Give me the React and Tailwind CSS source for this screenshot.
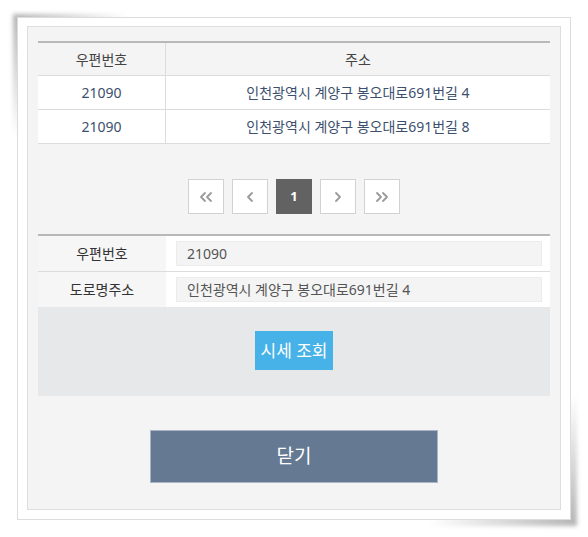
const font = "font-['Noto_Sans','Noto_Sans_CJK_KR',sans-serif]"

function Chevron({ double, right }) {
  return (
    <svg width={double ? 14 : 8} height="12" viewBox={double ? '0 0 14 12' : '0 0 8 12'} fill="none"
      stroke="#9a9a9a" strokeWidth="1.8" strokeLinecap="round" strokeLinejoin="round"
      style={{ transform: right ? 'scaleX(-1)' : undefined }}>
      {double ? (
        <>
          <path d="M6 2 2 6l4 4" />
          <path d="M12 2 8 6l4 4" />
        </>
      ) : (
        <path d="M6 2 2 6l4 4" />
      )}
    </svg>
  )
}

const rows = [
  { zip: '21090', addr: '인천광역시 계양구 봉오대로691번길 4' },
  { zip: '21090', addr: '인천광역시 계양구 봉오대로691번길 8' },
]

export default function App() {
  return (
    <div className={`min-h-[537px] bg-white pt-[17px] pl-[17px] ${font}`}>
      {/* framed popup */}
      <div className="relative isolate w-[554px] h-[503px]">
        <div className="absolute -left-[4px] -top-[3px] w-[130px] h-[140px] -z-10 bg-gradient-to-br from-black/30 to-transparent to-45% blur-[2px]" />
        <div className="absolute -right-[6px] -bottom-[6px] w-[170px] h-[150px] -z-10 bg-gradient-to-tl from-black/30 to-transparent to-45% blur-[2px]" />

        <div className="h-full bg-white border border-[#dcdcdc] pt-[8px] px-[9px] pb-[9px]">
          <div className="h-full bg-[#f4f4f4] border border-[#dedede] pt-[14px] px-[10px]">

            {/* result table */}
            <div className="border-t-2 border-[#b8b8b8] text-[14px]">
              <div className="flex h-[33px] bg-[#f4f4f4] border-b border-[#dcdcdc] text-[#444]">
                <div className="w-[128px] border-r border-[#dcdcdc] flex items-center justify-center">우편번호</div>
                <div className="flex-1 flex items-center justify-center">주소</div>
              </div>
              {rows.map((r, i) => (
                <div key={i} className="flex h-[34px] bg-white border-b border-[#dcdcdc] text-[#3c4f6d]">
                  <div className="w-[128px] border-r border-[#dcdcdc] flex items-center justify-center">{r.zip}</div>
                  <div className="flex-1 flex items-center justify-center">{r.addr}</div>
                </div>
              ))}
            </div>

            {/* pagination */}
            <div className="flex justify-center gap-[8px] mt-[35px]">
              <button className="w-[36px] h-[35px] bg-white border border-[#d2d2d2] flex items-center justify-center"><Chevron double /></button>
              <button className="w-[36px] h-[35px] bg-white border border-[#d2d2d2] flex items-center justify-center"><Chevron /></button>
              <button className="w-[36px] h-[35px] bg-[#626262] flex items-center justify-center text-white text-[13px] font-bold">1</button>
              <button className="w-[36px] h-[35px] bg-white border border-[#d2d2d2] flex items-center justify-center"><Chevron right /></button>
              <button className="w-[36px] h-[35px] bg-white border border-[#d2d2d2] flex items-center justify-center"><Chevron double right /></button>
            </div>

            {/* selected address */}
            <div className="mt-[20px] border-t-2 border-[#b8b8b8] text-[14px]">
              <div className="flex h-[36px] bg-white border-b border-[#dcdcdc]">
                <div className="w-[128px] bg-[#f6f6f6] flex items-center justify-center text-[#333]">우편번호</div>
                <div className="flex-1 flex items-center pl-[10px] pr-[8px]">
                  <div className="w-full h-[25px] bg-[#f4f4f4] border border-[#ececec] flex items-center pl-[10px] text-[#555]">21090</div>
                </div>
              </div>
              <div className="flex h-[35px] bg-white">
                <div className="w-[128px] bg-[#f6f6f6] flex items-center justify-center text-[#333]">도로명주소</div>
                <div className="flex-1 flex items-center pl-[10px] pr-[8px]">
                  <div className="w-full h-[25px] bg-[#f4f4f4] border border-[#ececec] flex items-center pl-[10px] text-[#555]">인천광역시 계양구 봉오대로691번길 4</div>
                </div>
              </div>
              <div className="h-[89px] bg-[#e7e8ea] flex items-center justify-center pb-[2px]">
                <button className="w-[78px] h-[39px] bg-[#47b2e7] text-white text-[17px]">시세 조회</button>
              </div>
            </div>

            {/* close */}
            <div className="flex justify-center mt-[34px]">
              <button className="w-[288px] h-[53px] bg-[#657992] border border-[#a9b6c6] text-white text-[19px]">닫기</button>
            </div>
          </div>
        </div>
      </div>
    </div>
  )
}
